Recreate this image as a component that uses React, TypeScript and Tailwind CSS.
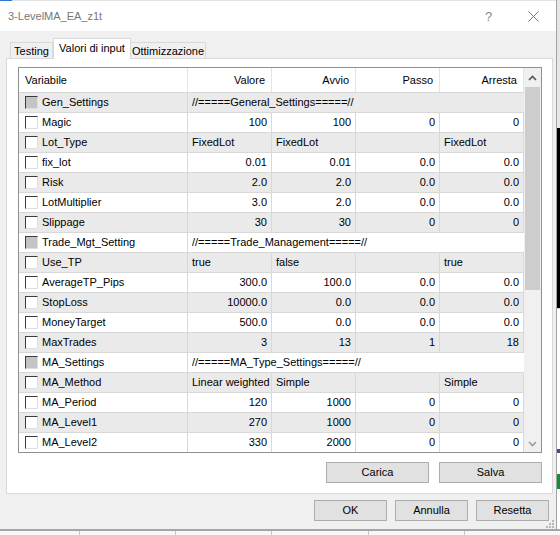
type Row = {
  name: string;
  comment?: string;
  values?: string[];
  left?: boolean;
};

const rows: Row[] = [
  { name: "Gen_Settings", comment: "//=====General_Settings=====//" },
  { name: "Magic", values: ["100", "100", "0", "0"] },
  { name: "Lot_Type", values: ["FixedLot", "FixedLot", "", "FixedLot"], left: true },
  { name: "fix_lot", values: ["0.01", "0.01", "0.0", "0.0"] },
  { name: "Risk", values: ["2.0", "2.0", "0.0", "0.0"] },
  { name: "LotMultiplier", values: ["3.0", "2.0", "0.0", "0.0"] },
  { name: "Slippage", values: ["30", "30", "0", "0"] },
  { name: "Trade_Mgt_Setting", comment: "//=====Trade_Management=====//" },
  { name: "Use_TP", values: ["true", "false", "", "true"], left: true },
  { name: "AverageTP_Pips", values: ["300.0", "100.0", "0.0", "0.0"] },
  { name: "StopLoss", values: ["10000.0", "0.0", "0.0", "0.0"] },
  { name: "MoneyTarget", values: ["500.0", "0.0", "0.0", "0.0"] },
  { name: "MaxTrades", values: ["3", "13", "1", "18"] },
  { name: "MA_Settings", comment: "//=====MA_Type_Settings=====//" },
  { name: "MA_Method", values: ["Linear weighted", "Simple", "", "Simple"], left: true },
  { name: "MA_Period", values: ["120", "1000", "0", "0"] },
  { name: "MA_Level1", values: ["270", "1000", "0", "0"] },
  { name: "MA_Level2", values: ["330", "2000", "0", "0"] },
];

function Checkbox({ disabled }: { disabled?: boolean }) {
  return (
    <div
      className={`w-[13px] h-[13px] shrink-0 border border-t-[#3c3c3c] border-l-[#3c3c3c] border-r-[#dedede] border-b-[#dedede] ${
        disabled ? "bg-[#c4c4c4]" : "bg-white"
      }`}
    />
  );
}

function Button({ label, w }: { label: string; w: string }) {
  return (
    <div
      className={`${w} h-[21px] flex items-center justify-center bg-[#e1e1e1] border border-[#adadad] text-[11px] text-black`}
    >
      {label}
    </div>
  );
}

function ScrollBar() {
  return (
    <div className="w-[17px] flex flex-col bg-[#f0f0f0]">
      <div className="h-[19px] flex items-center justify-center">
        <svg width="9" height="6" viewBox="0 0 9 6">
          <path d="M1 5 L4.5 1.5 L8 5" fill="none" stroke="#555" strokeWidth="1.6" />
        </svg>
      </div>
      <div className="flex-1 px-px">
        <div className="h-[203px] bg-[#cdcdcd]" />
      </div>
      <div className="h-[17px] flex items-center justify-center">
        <svg width="9" height="6" viewBox="0 0 9 6">
          <path d="M1 1 L4.5 4.5 L8 1" fill="none" stroke="#9a9a9a" strokeWidth="1.6" />
        </svg>
      </div>
    </div>
  );
}

function Grid() {
  const headers = ["Valore", "Avvio", "Passo", "Arresta"];
  return (
    <div className="w-[524px] h-[386px] border border-[#8f8f8f] flex bg-white overflow-hidden">
      <div className="w-[505px] flex flex-col">
        <div className="h-[25px] flex border-b border-[#d8d8d8] shrink-0">
          <div className="w-[169px] border-r border-[#e5e5e5] flex items-center pl-[6px]">
            Variabile
          </div>
          {headers.map((h) => (
            <div
              key={h}
              className="w-[84px] border-r border-[#e5e5e5] flex items-center justify-end pr-[6px]"
            >
              {h}
            </div>
          ))}
        </div>
        {rows.map((r, i) => (
          <div
            key={r.name}
            className={`h-[20px] shrink-0 flex border-b border-[#d8d8d8] ${
              i % 2 === 0 ? "bg-[#eaeaea]" : "bg-white"
            }`}
          >
            <div className="w-[169px] border-r border-[#d8d8d8] flex items-center pl-[6px] gap-[4px]">
              <Checkbox disabled={!!r.comment} />
              <span>{r.name}</span>
            </div>
            {r.comment ? (
              <div className="w-[336px] flex items-center pl-[4px]">{r.comment}</div>
            ) : (
              r.values!.map((v, j) => (
                <div
                  key={j}
                  className={`w-[84px] border-r border-[#d8d8d8] flex items-center ${
                    r.left ? "justify-start pl-[4px]" : "justify-end pr-[4px]"
                  }`}
                >
                  {v}
                </div>
              ))
            )}
          </div>
        ))}
      </div>
      <ScrollBar />
    </div>
  );
}

export default function App() {
  const otherCols = [0, 1, 2, 3, 4];
  return (
    <div className="w-[560px] h-[535px] flex flex-col overflow-hidden font-['Liberation_Sans',Arial,sans-serif] text-[11px] text-black leading-none">
      <div className="h-[529px] flex shrink-0">
        {/* dialog */}
        <div className="w-[557px] h-full flex flex-col border-r border-[#a3a3a3] relative">
          <div className="h-[31px] shrink-0 bg-white flex flex-col">
            <div className="h-px flex shrink-0">
              <div className="w-[12px] bg-[#2b79d0]" />
              <div className="flex-1 bg-[#e2e2e2]" />
            </div>
            <div className="flex-1 flex items-center">
              <span className="pl-[8px] text-[11px] text-[#777]">3-LevelMA_EA_z1t</span>
              <div className="ml-auto flex h-full">
                <div className="w-[45px] flex items-center justify-center text-[13px] text-[#8a8a8a]">
                  ?
                </div>
                <div className="w-[45px] flex items-center justify-center">
                  <svg width="11" height="11" viewBox="0 0 11 11">
                    <path d="M0.5 0.5 L10.5 10.5 M10.5 0.5 L0.5 10.5" stroke="#7a7a7a" strokeWidth="1" />
                  </svg>
                </div>
              </div>
            </div>
          </div>
          <div className="flex-1 bg-[#f0f0f0] flex flex-col">
            <div className="pt-[7px] pl-[10px] flex items-end h-[28px] shrink-0 relative z-10 -mb-px">
              <div className="w-[43px] h-[17px] border border-b-0 border-[#d9d9d9] flex items-center justify-center">
                Testing
              </div>
              <div className="w-[78px] h-[21px] bg-white border border-b-0 border-[#d9d9d9] flex items-center justify-center pb-[2px]">
                Valori di input
              </div>
              <div className="w-[75px] h-[17px] border border-b-0 border-l-0 border-[#d9d9d9] flex items-center justify-center">
                Ottimizzazione
              </div>
            </div>
            <div className="ml-[6px] w-[547px] h-[436px] shrink-0 bg-white border border-[#d9d9d9] pl-[11px] pt-[8px]">
              <Grid />
              <div className="w-[524px] flex justify-end gap-[10px] mt-[9px]">
                <Button label="Carica" w="w-[103px]" />
                <Button label="Salva" w="w-[103px]" />
              </div>
            </div>
            <div className="flex justify-end gap-[8px] pr-[7px] mt-[6px]">
              <Button label="OK" w="w-[73px]" />
              <Button label="Annulla" w="w-[73px]" />
              <Button label="Resetta" w="w-[73px]" />
            </div>
          </div>
          <svg
            className="absolute right-[2px] bottom-[1px]"
            width="9"
            height="9"
            viewBox="0 0 9 9"
          >
            <rect x="7" y="1" width="2" height="2" fill="#b8b8b8" />
            <rect x="4" y="4" width="2" height="2" fill="#b8b8b8" />
            <rect x="7" y="4" width="2" height="2" fill="#b8b8b8" />
            <rect x="1" y="7" width="2" height="2" fill="#b8b8b8" />
            <rect x="4" y="7" width="2" height="2" fill="#b8b8b8" />
            <rect x="7" y="7" width="2" height="2" fill="#b8b8b8" />
          </svg>
        </div>
        {/* neighbouring window edge */}
        <div className="w-[3px] flex flex-col">
          <div className="h-[128px] bg-[#e6e6e6]" />
          <div className="h-[180px] bg-black" />
          <div className="h-[141px] bg-white border-t border-[#cfcfcf]" />
          <div className="h-[4px] bg-[#5a3d8a]" />
          <div className="h-[21px] bg-white" />
          <div className="h-[15px] bg-[#1a8a3a]" />
          <div className="flex-1 bg-white" />
        </div>
      </div>
      <div className="h-[2px] bg-[#a5a5a5] shrink-0" />
      <div className="flex-1 flex bg-[#f7f7f7]">
        <div className="w-[83px]" />
        {otherCols.map((c) => (
          <div key={c} className="w-[101px] border-l border-[#c8c8c8]" />
        ))}
      </div>
    </div>
  );
}
